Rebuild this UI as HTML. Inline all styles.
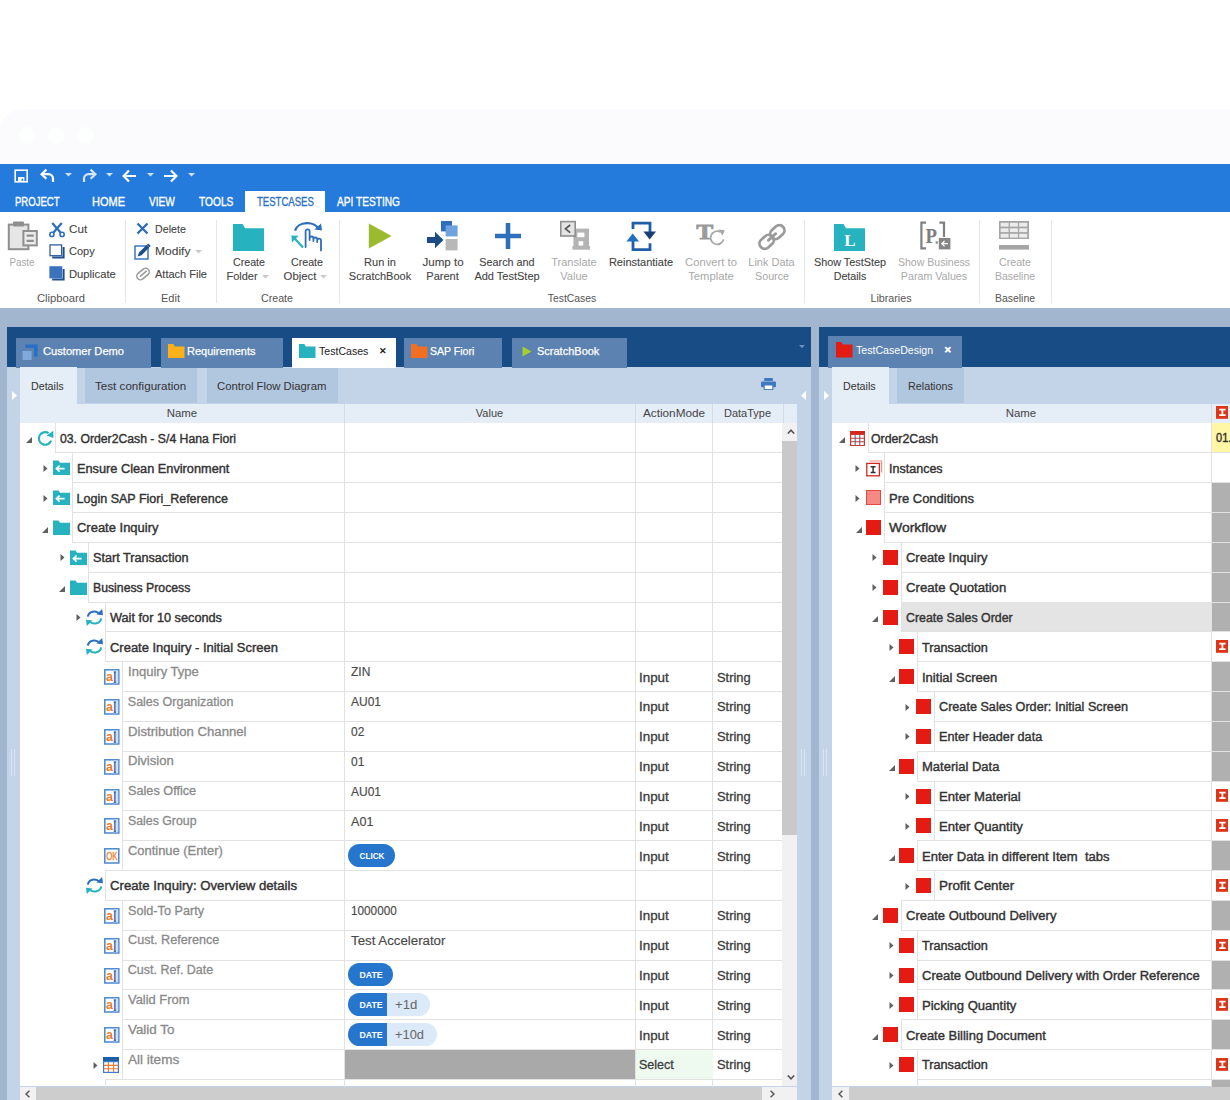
<!DOCTYPE html>
<html lang="en"><head><meta charset="utf-8"><title>TestCases</title>
<style>

html,body{margin:0;padding:0;background:#fff;}
#root{position:relative;width:1230px;height:1100px;overflow:hidden;background:#fff;font-family:"Liberation Sans", Arial, sans-serif;}
#root div,#root svg,#root span.t{position:absolute;}
.t{white-space:pre;line-height:14px;font-size:11px;color:#444;}
.menu{font-size:12px;color:#fff;-webkit-text-stroke:0.35px #fff;}
.menuA{font-size:12px;color:#2a6fc4;-webkit-text-stroke:0.3px #2a6fc4;}
.rb{font-size:11px;color:#444;-webkit-text-stroke:0.1px #444;}
.rbg{font-size:11px;color:#a9a9a9;}
.rbl{font-size:11px;color:#555;}
.ptab{font-size:11px;color:#fff;-webkit-text-stroke:0.25px #fff;}
.ptabA{font-size:11px;color:#222;}
.stab{font-size:11px;color:#333;}
.th{font-size:11px;color:#444;}
.tr{font-size:12.5px;color:#333;-webkit-text-stroke:0.4px #333;}
.trn{font-size:12.5px;color:#333;}
.tg{font-size:12.5px;color:#8a8a8a;-webkit-text-stroke:0.3px #8a8a8a;}
.tv{font-size:12.5px;color:#3c3c3c;-webkit-text-stroke:0.3px #3c3c3c;}
.tvs{font-size:12px;color:#4a4a4a;-webkit-text-stroke:0.15px #4a4a4a;}
.pill{font-size:8.5px;color:#fff;font-weight:bold;}
.pillv{font-size:12px;color:#666;}

</style></head>
<body>
<div id="root">
<div style="left:0px;top:109px;width:1230px;height:60px;background:#fbfbfd;border-top-left-radius:22px;"></div>
<div style="left:18.5px;top:127px;width:17px;height:17px;background:#fdfefe;border-radius:8.5px;"></div>
<div style="left:47.5px;top:127px;width:17px;height:17px;background:#fdfefe;border-radius:8.5px;"></div>
<div style="left:76.5px;top:127px;width:17px;height:17px;background:#fdfefe;border-radius:8.5px;"></div>
<div style="left:0px;top:164px;width:1230px;height:48px;background:#257bdc;"></div>
<svg style="left:14px;top:169px;" width="15" height="15" viewBox="0 0 15 15"><rect x="1.2" y="1.2" width="12" height="11.6" fill="none" stroke="#fff" stroke-width="1.6"/><rect x="4" y="8" width="6.4" height="4.6" fill="#fff"/><rect x="7.6" y="9.6" width="1.6" height="2.2" fill="#257bdc"/></svg>
<svg style="left:40px;top:168px;" width="16" height="16" viewBox="0 0 16 16"><path d="M2 6.2 H8.5 A4.6 4.6 0 0 1 13 10.8 V14" fill="none" stroke="#fff" stroke-width="2.2"/><path d="M6.4 1.6 L1.6 6.2 L6.4 10.8" fill="none" stroke="#fff" stroke-width="2.2"/></svg>
<svg style="left:65px;top:173px;" width="7" height="4" viewBox="0 0 7 4"><path d="M0 0 H7 L3.5 3.6 Z" fill="#cfe1f7"/></svg>
<svg style="left:81px;top:168px;" width="16" height="16" viewBox="0 0 16 16"><path d="M14 6.2 H7.5 A4.6 4.6 0 0 0 3 10.8 V14" fill="none" stroke="#d7e6f8" stroke-width="2.2"/><path d="M9.6 1.6 L14.4 6.2 L9.6 10.8" fill="none" stroke="#d7e6f8" stroke-width="2.2"/></svg>
<svg style="left:105.5px;top:173px;" width="7" height="4" viewBox="0 0 7 4"><path d="M0 0 H7 L3.5 3.6 Z" fill="#cfe1f7"/></svg>
<svg style="left:122px;top:169px;" width="15" height="14" viewBox="0 0 15 14"><path d="M1.6 7 H14 M7 1.4 L1.6 7 L7 12.6" fill="none" stroke="#fff" stroke-width="2.2"/></svg>
<svg style="left:147px;top:173px;" width="7" height="4" viewBox="0 0 7 4"><path d="M0 0 H7 L3.5 3.6 Z" fill="#cfe1f7"/></svg>
<svg style="left:163px;top:169px;" width="15" height="14" viewBox="0 0 15 14"><path d="M13.4 7 H1 M8 1.4 L13.4 7 L8 12.6" fill="none" stroke="#fff" stroke-width="2.2"/></svg>
<svg style="left:188px;top:173px;" width="7" height="4" viewBox="0 0 7 4"><path d="M0 0 H7 L3.5 3.6 Z" fill="#cfe1f7"/></svg>
<span class="t menu" style="top:202px;left:15px;transform-origin:0 50%;transform:translateY(-50%) scaleX(0.795);">PROJECT</span>
<span class="t menu" style="top:202px;left:92px;transform-origin:0 50%;transform:translateY(-50%) scaleX(0.917);">HOME</span>
<span class="t menu" style="top:202px;left:149px;transform-origin:0 50%;transform:translateY(-50%) scaleX(0.839);">VIEW</span>
<span class="t menu" style="top:202px;left:199px;transform-origin:0 50%;transform:translateY(-50%) scaleX(0.850);">TOOLS</span>
<div style="left:245px;top:191px;width:80px;height:22px;background:#fff;"></div>
<span class="t menuA" style="top:202px;left:257px;transform-origin:0 50%;transform:translateY(-50%) scaleX(0.796);">TESTCASES</span>
<span class="t menu" style="top:202px;left:337px;transform-origin:0 50%;transform:translateY(-50%) scaleX(0.845);">API TESTING</span>
<div style="left:0px;top:212px;width:1230px;height:96px;background:#fff;"></div>
<svg style="left:7px;top:221px;" width="32" height="31" viewBox="0 0 32 31"><rect x="1.8" y="3.6" width="19.6" height="24.6" fill="#e6e6e6" stroke="#8f8f8f" stroke-width="2"/><rect x="6" y="0.6" width="11" height="5" rx="1" fill="#8f8f8f"/><rect x="16.4" y="10" width="13.4" height="14.4" fill="#ececec" stroke="#8f8f8f" stroke-width="2"/><path d="M19.6 14.6 H26.8 M19.6 19.8 H26.8" stroke="#8f8f8f" stroke-width="2.2"/></svg>
<span class="t rbg" style="top:262px;left:22px;transform-origin:50% 50%;transform:translate(-50%,-50%) scaleX(0.893);">Paste</span>
<svg style="left:49px;top:222px;" width="16" height="16" viewBox="0 0 16 16"><path d="M3.2 1 L12 11 M12.8 1 L4 11" stroke="#2e6fbb" stroke-width="2.3" fill="none"/><circle cx="2.9" cy="12.4" r="2.1" fill="#fff" stroke="#2e6fbb" stroke-width="1.6"/><circle cx="13.1" cy="12.4" r="2.1" fill="#fff" stroke="#2e6fbb" stroke-width="1.6"/></svg>
<span class="t rb" style="top:229px;left:69px;transform-origin:0 50%;transform:translateY(-50%) scaleX(1.059);">Cut</span>
<svg style="left:49px;top:244px;" width="16" height="15" viewBox="0 0 16 15"><path d="M3.2 13.6 H14.6 V3" fill="none" stroke="#1f4f8a" stroke-width="2"/><rect x="1" y="0.9" width="11.6" height="10.8" fill="#fff" stroke="#2e5f9e" stroke-width="1.3"/></svg>
<span class="t rb" style="top:251px;left:69px;transform-origin:0 50%;transform:translateY(-50%) scaleX(1.000);">Copy</span>
<svg style="left:49px;top:266px;" width="16" height="15" viewBox="0 0 16 15"><path d="M3.2 13.6 H14.6 V3" fill="none" stroke="#1f4f8a" stroke-width="2"/><rect x="1" y="0.9" width="11.6" height="10.8" fill="#3b72bd" stroke="#3b72bd" stroke-width="1.3"/></svg>
<span class="t rb" style="top:273.5px;left:69px;transform-origin:0 50%;transform:translateY(-50%) scaleX(1.022);">Duplicate</span>
<span class="t rbl" style="top:298px;left:61px;transform-origin:50% 50%;transform:translate(-50%,-50%) scaleX(1.021);">Clipboard</span>
<div style="left:125px;top:220px;width:1px;height:83px;background:#e6e6e6;"></div>
<svg style="left:136px;top:222px;" width="13" height="13" viewBox="0 0 13 13"><path d="M1.5 1.5 L11.5 11.5 M11.5 1.5 L1.5 11.5" stroke="#2b6cb8" stroke-width="2.3" fill="none"/></svg>
<span class="t rb" style="top:229px;left:155px;transform-origin:0 50%;transform:translateY(-50%) scaleX(0.969);">Delete</span>
<svg style="left:134px;top:243px;" width="17" height="17" viewBox="0 0 17 17"><rect x="1" y="3" width="13" height="13" fill="#fff" stroke="#2e6fbb" stroke-width="1.4"/><path d="M3.6 13.6 L5 9.6 L12.6 2 L15.2 4.6 L7.6 12.2 Z" fill="#1f4f8a"/><path d="M13.6 1 L16.2 3.6" stroke="#1f4f8a" stroke-width="1.6"/></svg>
<span class="t rb" style="top:251px;left:155px;transform-origin:0 50%;transform:translateY(-50%) scaleX(1.094);">Modify</span>
<svg style="left:195px;top:249.5px;" width="7" height="4" viewBox="0 0 7 4"><path d="M0 0 H7 L3.5 3.6 Z" fill="#c9c9c9"/></svg>
<svg style="left:135px;top:266px;" width="16" height="16" viewBox="0 0 16 16"><g transform="rotate(-40 8 8)"><rect x="1" y="4.4" width="14" height="7.2" rx="3.6" fill="none" stroke="#9a9a9a" stroke-width="1.5"/><path d="M4.6 8 H12.4" stroke="#9a9a9a" stroke-width="1.5" stroke-linecap="round"/></g></svg>
<span class="t rb" style="top:273.5px;left:155px;transform-origin:0 50%;transform:translateY(-50%) scaleX(1.000);">Attach File</span>
<span class="t rbl" style="top:298px;left:170.5px;transform-origin:50% 50%;transform:translate(-50%,-50%) scaleX(1.000);">Edit</span>
<div style="left:216px;top:220px;width:1px;height:83px;background:#e6e6e6;"></div>
<svg style="left:233px;top:223px;" width="31" height="28" viewBox="0 0 31 28"><path d="M0 1 H9.5 L12 5.2 H31 V28 H0 Z" fill="#26b2bf"/></svg>
<span class="t rb" style="top:262px;left:249px;transform-origin:50% 50%;transform:translate(-50%,-50%) scaleX(0.970);">Create</span>
<span class="t rb" style="top:276px;left:242px;transform-origin:50% 50%;transform:translate(-50%,-50%) scaleX(1.000);">Folder</span>
<svg style="left:262px;top:274.5px;" width="7" height="4" viewBox="0 0 7 4"><path d="M0 0 H7 L3.5 3.6 Z" fill="#c9c9c9"/></svg>
<svg style="left:290px;top:221px;" width="33" height="31" viewBox="0 0 33 31"><path d="M5 9.6 A12.5 9.6 0 0 1 29 8.6" fill="none" stroke="#2e6fbb" stroke-width="2.3"/><path d="M24.4 8.6 L32 9.6 L31 2.6 Z" fill="#2e6fbb"/><path d="M1.4 14.6 L8.6 14.8 L2 21.6 Z" fill="#26b2bf"/><path d="M4.6 17.6 L13 26.6" stroke="#26b2bf" stroke-width="2.2"/><path d="M15.6 26 V10.4 a2 2 0 0 1 4 0 V19 M19.6 17.4 a1.9 1.9 0 0 1 3.8 0 V20 M23.4 18.4 a1.9 1.9 0 0 1 3.8 0 V21 M27.2 19.6 a1.9 1.9 0 0 1 3.8 0 V29.4" fill="none" stroke="#2e6fbb" stroke-width="1.8" stroke-linecap="round"/></svg>
<span class="t rb" style="top:262px;left:306.5px;transform-origin:50% 50%;transform:translate(-50%,-50%) scaleX(0.970);">Create</span>
<span class="t rb" style="top:276px;left:300px;transform-origin:50% 50%;transform:translate(-50%,-50%) scaleX(1.031);">Object</span>
<svg style="left:320px;top:274.5px;" width="7" height="4" viewBox="0 0 7 4"><path d="M0 0 H7 L3.5 3.6 Z" fill="#c9c9c9"/></svg>
<span class="t rbl" style="top:298px;left:277px;transform-origin:50% 50%;transform:translate(-50%,-50%) scaleX(0.970);">Create</span>
<div style="left:339px;top:220px;width:1px;height:83px;background:#e6e6e6;"></div>
<svg style="left:368px;top:222px;" width="26" height="28" viewBox="0 0 26 28"><path d="M0.8 1.4 L23.6 14 L0.8 26.6 Z" fill="#9bbb2f"/></svg>
<span class="t rb" style="top:262px;left:380px;transform-origin:50% 50%;transform:translate(-50%,-50%) scaleX(1.000);">Run in</span>
<span class="t rb" style="top:276px;left:380px;transform-origin:50% 50%;transform:translate(-50%,-50%) scaleX(1.000);">ScratchBook</span>
<svg style="left:427px;top:221px;" width="32" height="31" viewBox="0 0 32 31"><rect x="14" y="0" width="11" height="10.4" fill="#2e6fbb"/><rect x="18.6" y="4.4" width="12" height="11" fill="#6fa3df"/><rect x="18.6" y="18" width="12" height="11.4" fill="#b8b8b8"/><path d="M0 16 H8 V10.8 L16.4 19 L8 27.2 V22 H0 Z" fill="#1b4c86"/></svg>
<span class="t rb" style="top:262px;left:442.5px;transform-origin:50% 50%;transform:translate(-50%,-50%) scaleX(1.051);">Jump to</span>
<span class="t rb" style="top:276px;left:442.5px;transform-origin:50% 50%;transform:translate(-50%,-50%) scaleX(1.000);">Parent</span>
<svg style="left:494px;top:222px;" width="28" height="28" viewBox="0 0 28 28"><path d="M14 1 V27 M1 14 H27" stroke="#2e6fbb" stroke-width="4.6" fill="none"/></svg>
<span class="t rb" style="top:262px;left:507px;transform-origin:50% 50%;transform:translate(-50%,-50%) scaleX(0.982);">Search and</span>
<span class="t rb" style="top:276px;left:507px;transform-origin:50% 50%;transform:translate(-50%,-50%) scaleX(1.000);">Add TestStep</span>
<svg style="left:559px;top:220px;" width="31" height="32" viewBox="0 0 31 32"><rect x="14.4" y="8.6" width="15.6" height="20.6" fill="#b4b4b4"/><rect x="13.4" y="26" width="17.6" height="3.6" fill="#b4b4b4"/><rect x="18.4" y="12.6" width="7" height="4.6" fill="#fff"/><rect x="19.6" y="21.2" width="4.6" height="4.4" fill="#fff"/><rect x="1.8" y="1.6" width="14.4" height="14.4" fill="#e4e4e4" stroke="#8f8f8f" stroke-width="1.6"/><path d="M11.2 5 L6.4 8.8 L11.2 12.6" fill="none" stroke="#555" stroke-width="1.6"/></svg>
<span class="t rbg" style="top:262px;left:574px;transform-origin:50% 50%;transform:translate(-50%,-50%) scaleX(1.000);">Translate</span>
<span class="t rbg" style="top:276px;left:574px;transform-origin:50% 50%;transform:translate(-50%,-50%) scaleX(1.000);">Value</span>
<svg style="left:626px;top:221px;" width="32" height="31" viewBox="0 0 32 31"><path d="M7 8 V2.2 H24 V11" fill="none" stroke="#1f5fa8" stroke-width="2.8"/><path d="M17.4 10.4 H30 L23.7 18.4 Z" fill="#173f73"/><path d="M7 19.5 V28.6 H24 V22.2" fill="none" stroke="#1f5fa8" stroke-width="2.8"/><path d="M0.4 20.4 H13 L6.7 12.4 Z" fill="#1f6fc0"/></svg>
<span class="t rb" style="top:262px;left:641px;transform-origin:50% 50%;transform:translate(-50%,-50%) scaleX(1.000);">Reinstantiate</span>
<svg style="left:696px;top:222px;" width="32" height="30" viewBox="0 0 32 30"><text x="0.2" y="16.6" font-family="Liberation Serif, serif" font-weight="bold" font-size="22" fill="#9a9a9a" stroke="#9a9a9a" stroke-width="0.9" textLength="17" lengthAdjust="spacingAndGlyphs">T</text><path d="M27.6 17.4 A6.6 6.6 0 1 1 24.4 10" fill="none" stroke="#a6a6a6" stroke-width="1.8"/><path d="M22.4 7.4 L28.8 8.2 L26.4 13.6 Z" fill="#a6a6a6"/></svg>
<span class="t rbg" style="top:262px;left:711px;transform-origin:50% 50%;transform:translate(-50%,-50%) scaleX(1.020);">Convert to</span>
<span class="t rbg" style="top:276px;left:711px;transform-origin:50% 50%;transform:translate(-50%,-50%) scaleX(1.022);">Template</span>
<svg style="left:757px;top:222px;" width="30" height="30" viewBox="0 0 30 30"><g transform="rotate(-42 15 15)" fill="none" stroke="#9a9a9a" stroke-width="2.8"><rect x="0" y="9.8" width="15.6" height="10.4" rx="5.2"/><rect x="14.4" y="9.8" width="15.6" height="10.4" rx="5.2"/><path d="M10 15 H20" stroke-linecap="round"/></g></svg>
<span class="t rbg" style="top:262px;left:771.5px;transform-origin:50% 50%;transform:translate(-50%,-50%) scaleX(1.000);">Link Data</span>
<span class="t rbg" style="top:276px;left:771.5px;transform-origin:50% 50%;transform:translate(-50%,-50%) scaleX(0.971);">Source</span>
<span class="t rbl" style="top:298px;left:572px;transform-origin:50% 50%;transform:translate(-50%,-50%) scaleX(0.941);">TestCases</span>
<div style="left:804px;top:220px;width:1px;height:83px;background:#e6e6e6;"></div>
<svg style="left:834px;top:223px;" width="31" height="28" viewBox="0 0 31 28"><path d="M0 1 H9.5 L12 5.2 H31 V28 H0 Z" fill="#26b2bf"/></svg>
<svg style="left:834px;top:223px;" width="31" height="28" viewBox="0 0 31 28"><text x="16" y="22.5" text-anchor="middle" font-family="Liberation Serif, serif" font-weight="bold" font-size="17" fill="#fff">L</text></svg>
<span class="t rb" style="top:262px;left:850px;transform-origin:50% 50%;transform:translate(-50%,-50%) scaleX(0.986);">Show TestStep</span>
<span class="t rb" style="top:276px;left:850px;transform-origin:50% 50%;transform:translate(-50%,-50%) scaleX(0.971);">Details</span>
<svg style="left:918px;top:221px;" width="33" height="31" viewBox="0 0 33 31"><path d="M8 1.6 H3.4 V27.4 H8" fill="none" stroke="#808080" stroke-width="2.2"/><path d="M21.4 1.6 H26 V16" fill="none" stroke="#808080" stroke-width="2.2"/><text x="7.4" y="21.5" font-family="Liberation Serif, serif" font-weight="bold" font-size="22" fill="#7d7d7d" textLength="11.5" lengthAdjust="spacingAndGlyphs">P</text><rect x="17.6" y="20.4" width="2.2" height="2.2" fill="#808080"/><rect x="20.8" y="17" width="11.6" height="11.4" fill="#858585"/><path d="M30 22.7 H24 M26.6 20 L23.8 22.7 L26.6 25.4" stroke="#fff" stroke-width="1.3" fill="none"/></svg>
<span class="t rbg" style="top:262px;left:934px;transform-origin:50% 50%;transform:translate(-50%,-50%) scaleX(0.960);">Show Business</span>
<span class="t rbg" style="top:276px;left:934px;transform-origin:50% 50%;transform:translate(-50%,-50%) scaleX(0.971);">Param Values</span>
<span class="t rbl" style="top:298px;left:891px;transform-origin:50% 50%;transform:translate(-50%,-50%) scaleX(0.976);">Libraries</span>
<div style="left:979px;top:220px;width:1px;height:83px;background:#e6e6e6;"></div>
<svg style="left:999px;top:221px;" width="30" height="30" viewBox="0 0 30 30"><rect x="0" y="0" width="30" height="18" fill="#a6a6a6"/><rect x="1.6" y="1.8" width="8" height="3.8" fill="#ececec"/><rect x="10.9" y="1.8" width="8" height="3.8" fill="#ececec"/><rect x="20.2" y="1.8" width="8" height="3.8" fill="#ececec"/><rect x="1.6" y="7.3" width="8" height="3.8" fill="#ececec"/><rect x="10.9" y="7.3" width="8" height="3.8" fill="#ececec"/><rect x="20.2" y="7.3" width="8" height="3.8" fill="#ececec"/><rect x="1.6" y="12.8" width="8" height="3.8" fill="#ececec"/><rect x="10.9" y="12.8" width="8" height="3.8" fill="#ececec"/><rect x="20.2" y="12.8" width="8" height="3.8" fill="#ececec"/><rect x="0" y="24" width="30" height="4.6" fill="#a6a6a6"/></svg>
<span class="t rbg" style="top:262px;left:1014.5px;transform-origin:50% 50%;transform:translate(-50%,-50%) scaleX(0.970);">Create</span>
<span class="t rbg" style="top:276px;left:1014.5px;transform-origin:50% 50%;transform:translate(-50%,-50%) scaleX(0.952);">Baseline</span>
<span class="t rbl" style="top:298px;left:1014.5px;transform-origin:50% 50%;transform:translate(-50%,-50%) scaleX(0.952);">Baseline</span>
<div style="left:1051px;top:220px;width:1px;height:83px;background:#e6e6e6;"></div>
<div style="left:0px;top:308px;width:1230px;height:792px;background:#a3b6cf;"></div>
<div style="left:6.5px;top:327px;width:804.1px;height:773px;background:#c3d4e8;"></div>
<div style="left:6.5px;top:327px;width:804.1px;height:40px;background:#174c85;"></div>
<div style="left:16.4px;top:338px;width:135.1px;height:29.5px;background:#5b82b0;"></div>
<svg style="left:21.9px;top:343.5px;" width="17" height="17" viewBox="0 0 17 17"><path d="M3.4 0.4 H15.6 V12.6 H12 V4 H3.4 Z" fill="#2a6fc4"/><rect x="0.6" y="7" width="9" height="9" fill="#7fa8dc"/></svg>
<span class="t ptab" style="top:351.3px;left:43px;transform-origin:0 50%;transform:translateY(-50%) scaleX(1.012);">Customer Demo</span>
<div style="left:161px;top:338px;width:122px;height:29.5px;background:#5b82b0;"></div>
<svg style="left:168px;top:343.7px;" width="17" height="14.5" viewBox="0 0 17 14.5"><path d="M0 0 H5.4 L6.8 2.4 H16.5 V14.5 H0 Z" fill="#fbb117"/></svg>
<span class="t ptab" style="top:351.3px;left:187px;transform-origin:0 50%;transform:translateY(-50%) scaleX(1.000);">Requirements</span>
<div style="left:292px;top:338px;width:104px;height:29.5px;background:#fff;"></div>
<svg style="left:299px;top:343.7px;" width="17" height="14.5" viewBox="0 0 17 14.5"><path d="M0 0 H5.4 L6.8 2.4 H16.5 V14.5 H0 Z" fill="#26b2bf"/></svg>
<span class="t ptabA" style="top:351.3px;left:319px;transform-origin:0 50%;transform:translateY(-50%) scaleX(0.961);">TestCases</span>
<div style="left:404px;top:338px;width:98px;height:29.5px;background:#5b82b0;"></div>
<svg style="left:411px;top:343.7px;" width="17" height="14.5" viewBox="0 0 17 14.5"><path d="M0 0 H5.4 L6.8 2.4 H16.5 V14.5 H0 Z" fill="#f26f21"/></svg>
<span class="t ptab" style="top:351.3px;left:430px;transform-origin:0 50%;transform:translateY(-50%) scaleX(0.957);">SAP Fiori</span>
<div style="left:511.5px;top:338px;width:115.5px;height:29.5px;background:#5b82b0;"></div>
<svg style="left:521.5px;top:345.5px;" width="10" height="11" viewBox="0 0 10 11"><path d="M0.5 0.5 L9.5 5.5 L0.5 10.5 Z" fill="#a4cf2e"/></svg>
<span class="t ptab" style="top:351.3px;left:537px;transform-origin:0 50%;transform:translateY(-50%) scaleX(1.000);">ScratchBook</span>
<span class="t ptabA" style="top:351.3px;left:379px;transform-origin:0 50%;transform:translateY(-50%);font-size:9px;font-weight:bold;">✕</span>
<svg style="left:799px;top:344.5px;" width="6" height="3.4" viewBox="0 0 6 3.4"><path d="M0 0 H6 L3 3.2 Z" fill="#6a8fbb"/></svg>
<div style="left:19.5px;top:367px;width:57px;height:36.5px;background:#e5edf7;"></div>
<div style="left:84.5px;top:367.5px;width:112px;height:35px;background:#b1c6df;"></div>
<div style="left:206.5px;top:367.5px;width:131px;height:35px;background:#b1c6df;"></div>
<span class="t stab" style="top:385.5px;left:30.5px;transform-origin:0 50%;transform:translateY(-50%) scaleX(0.971);">Details</span>
<span class="t stab" style="top:386px;left:95px;transform-origin:0 50%;transform:translateY(-50%) scaleX(1.058);">Test configuration</span>
<span class="t stab" style="top:386px;left:217px;transform-origin:0 50%;transform:translateY(-50%) scaleX(1.028);">Control Flow Diagram</span>
<svg style="left:11.5px;top:391px;" width="5" height="9" viewBox="0 0 5 9"><path d="M0 0 L5 4.5 L0 9 Z" fill="#fff"/></svg>
<svg style="left:801px;top:391px;" width="5" height="9" viewBox="0 0 5 9"><path d="M5 0 L0 4.5 L5 9 Z" fill="#fff"/></svg>
<div style="left:10.5px;top:749px;width:1.3px;height:27px;background:#dbe6f3;"></div>
<div style="left:13.5px;top:749px;width:1.3px;height:27px;background:#dbe6f3;"></div>
<div style="left:801px;top:749px;width:1.3px;height:27px;background:#dbe6f3;"></div>
<div style="left:804px;top:749px;width:1.3px;height:27px;background:#dbe6f3;"></div>
<svg style="left:761px;top:378px;" width="15" height="12" viewBox="0 0 15 12"><rect x="3.2" y="0" width="8.6" height="3" fill="#4178bf"/><rect x="0" y="3.6" width="15" height="5.6" rx="1" fill="#4178bf"/><rect x="3.2" y="7" width="8.6" height="4.6" fill="#fff" stroke="#4178bf" stroke-width="1"/></svg>
<div style="left:19.5px;top:403.5px;width:777.5px;height:20px;background:#e5edf7;"></div>
<div style="left:344px;top:404px;width:1px;height:19px;background:#d3dbe6;"></div>
<div style="left:635px;top:404px;width:1px;height:19px;background:#d3dbe6;"></div>
<div style="left:712.4px;top:404px;width:1px;height:19px;background:#d3dbe6;"></div>
<div style="left:783px;top:404px;width:1px;height:19px;background:#d3dbe6;"></div>
<span class="t th" style="top:412.5px;left:182px;transform-origin:50% 50%;transform:translate(-50%,-50%) scaleX(1.034);">Name</span>
<span class="t th" style="top:412.5px;left:489.5px;transform-origin:50% 50%;transform:translate(-50%,-50%) scaleX(1.000);">Value</span>
<span class="t th" style="top:412.5px;left:673.5px;transform-origin:50% 50%;transform:translate(-50%,-50%) scaleX(1.069);">ActionMode</span>
<span class="t th" style="top:412.5px;left:747.5px;transform-origin:50% 50%;transform:translate(-50%,-50%) scaleX(1.000);">DataType</span>
<div style="left:19.5px;top:423.4px;width:763.5px;height:663.1px;background:#fff;"></div>
<div style="left:55.0px;top:423.4px;width:1px;height:29.03000000000003px;background:#e2e2e2;"></div>
<div style="left:344px;top:423.4px;width:1px;height:29.03000000000003px;background:#e2e2e2;"></div>
<div style="left:635px;top:423.4px;width:1px;height:29.03000000000003px;background:#e2e2e2;"></div>
<div style="left:712.4px;top:423.4px;width:1px;height:29.03000000000003px;background:#e2e2e2;"></div>
<svg style="left:25.5px;top:437.1px;" width="6" height="6" viewBox="0 0 6 6"><path d="M6 0 V6 H0 Z" fill="#606060"/></svg>
<svg style="left:36.5px;top:429.90000000000003px;" width="17" height="17" viewBox="0 0 17 17"><path d="M14.1 10.6 A6.3 6.3 0 1 1 11.6 3.2" fill="none" stroke="#26b2bf" stroke-width="2.1"/><path d="M9.6 5.6 L16.4 0.8 L16.4 8 Z" fill="#26b2bf"/></svg>
<span class="t tr" style="top:438.90000000000003px;left:60.0px;transform-origin:0 50%;transform:translateY(-50%) scaleX(0.978);">03. Order2Cash - S/4 Hana Fiori</span>
<div style="left:55.0px;top:452.43px;width:728.0px;height:1px;background:#e2e2e2;"></div>
<div style="left:71.6px;top:452.43px;width:1px;height:29.829999999999984px;background:#e2e2e2;"></div>
<div style="left:344px;top:452.43px;width:1px;height:29.829999999999984px;background:#e2e2e2;"></div>
<div style="left:635px;top:452.43px;width:1px;height:29.829999999999984px;background:#e2e2e2;"></div>
<div style="left:712.4px;top:452.43px;width:1px;height:29.829999999999984px;background:#e2e2e2;"></div>
<svg style="left:43.1px;top:464.93px;" width="5" height="7" viewBox="0 0 5 7"><path d="M0.5 0 L4.5 3.5 L0.5 7 Z" fill="#606060"/></svg>
<svg style="left:53.1px;top:460.43px;" width="17" height="15" viewBox="0 0 17 15"><path d="M0 0.5 H5.6 L7 2.8 H17 V15 H0 Z" fill="#26b2bf"/><path d="M3.4 8.6 H11.6 M6.6 5.6 L3.4 8.6 L6.6 11.6" fill="none" stroke="#fff" stroke-width="1.7"/></svg>
<span class="t tr" style="top:468.73px;left:76.6px;transform-origin:0 50%;transform:translateY(-50%) scaleX(1.020);">Ensure Clean Environment</span>
<div style="left:71.6px;top:482.26px;width:711.4px;height:1px;background:#e2e2e2;"></div>
<div style="left:71.6px;top:482.26px;width:1px;height:29.83000000000004px;background:#e2e2e2;"></div>
<div style="left:344px;top:482.26px;width:1px;height:29.83000000000004px;background:#e2e2e2;"></div>
<div style="left:635px;top:482.26px;width:1px;height:29.83000000000004px;background:#e2e2e2;"></div>
<div style="left:712.4px;top:482.26px;width:1px;height:29.83000000000004px;background:#e2e2e2;"></div>
<svg style="left:43.1px;top:494.76px;" width="5" height="7" viewBox="0 0 5 7"><path d="M0.5 0 L4.5 3.5 L0.5 7 Z" fill="#606060"/></svg>
<svg style="left:53.1px;top:490.26px;" width="17" height="15" viewBox="0 0 17 15"><path d="M0 0.5 H5.6 L7 2.8 H17 V15 H0 Z" fill="#26b2bf"/><path d="M3.4 8.6 H11.6 M6.6 5.6 L3.4 8.6 L6.6 11.6" fill="none" stroke="#fff" stroke-width="1.7"/></svg>
<span class="t tr" style="top:498.56px;left:76.6px;transform-origin:0 50%;transform:translateY(-50%) scaleX(1.000);">Login SAP Fiori_Reference</span>
<div style="left:71.6px;top:512.09px;width:711.4px;height:1px;background:#e2e2e2;"></div>
<div style="left:71.6px;top:512.09px;width:1px;height:29.83000000000004px;background:#e2e2e2;"></div>
<div style="left:344px;top:512.09px;width:1px;height:29.83000000000004px;background:#e2e2e2;"></div>
<div style="left:635px;top:512.09px;width:1px;height:29.83000000000004px;background:#e2e2e2;"></div>
<div style="left:712.4px;top:512.09px;width:1px;height:29.83000000000004px;background:#e2e2e2;"></div>
<svg style="left:42.1px;top:526.59px;" width="6" height="6" viewBox="0 0 6 6"><path d="M6 0 V6 H0 Z" fill="#606060"/></svg>
<svg style="left:53.1px;top:520.09px;" width="17" height="15" viewBox="0 0 17 15"><path d="M0 0.5 H5.6 L7 2.8 H17 V15 H0 Z" fill="#26b2bf"/></svg>
<span class="t tr" style="top:528.39px;left:76.6px;transform-origin:0 50%;transform:translateY(-50%) scaleX(1.038);">Create Inquiry</span>
<div style="left:71.6px;top:541.9200000000001px;width:711.4px;height:1px;background:#e2e2e2;"></div>
<div style="left:88.2px;top:541.9200000000001px;width:1px;height:29.83000000000004px;background:#e2e2e2;"></div>
<div style="left:344px;top:541.9200000000001px;width:1px;height:29.83000000000004px;background:#e2e2e2;"></div>
<div style="left:635px;top:541.9200000000001px;width:1px;height:29.83000000000004px;background:#e2e2e2;"></div>
<div style="left:712.4px;top:541.9200000000001px;width:1px;height:29.83000000000004px;background:#e2e2e2;"></div>
<svg style="left:59.7px;top:554.4200000000001px;" width="5" height="7" viewBox="0 0 5 7"><path d="M0.5 0 L4.5 3.5 L0.5 7 Z" fill="#606060"/></svg>
<svg style="left:69.7px;top:549.9200000000001px;" width="17" height="15" viewBox="0 0 17 15"><path d="M0 0.5 H5.6 L7 2.8 H17 V15 H0 Z" fill="#26b2bf"/><path d="M3.4 8.6 H11.6 M6.6 5.6 L3.4 8.6 L6.6 11.6" fill="none" stroke="#fff" stroke-width="1.7"/></svg>
<span class="t tr" style="top:558.22px;left:93.2px;transform-origin:0 50%;transform:translateY(-50%) scaleX(1.011);">Start Transaction</span>
<div style="left:88.2px;top:571.75px;width:694.8px;height:1px;background:#e2e2e2;"></div>
<div style="left:88.2px;top:571.75px;width:1px;height:29.83000000000004px;background:#e2e2e2;"></div>
<div style="left:344px;top:571.75px;width:1px;height:29.83000000000004px;background:#e2e2e2;"></div>
<div style="left:635px;top:571.75px;width:1px;height:29.83000000000004px;background:#e2e2e2;"></div>
<div style="left:712.4px;top:571.75px;width:1px;height:29.83000000000004px;background:#e2e2e2;"></div>
<svg style="left:58.7px;top:586.25px;" width="6" height="6" viewBox="0 0 6 6"><path d="M6 0 V6 H0 Z" fill="#606060"/></svg>
<svg style="left:69.7px;top:579.75px;" width="17" height="15" viewBox="0 0 17 15"><path d="M0 0.5 H5.6 L7 2.8 H17 V15 H0 Z" fill="#26b2bf"/></svg>
<span class="t tr" style="top:588.05px;left:93.2px;transform-origin:0 50%;transform:translateY(-50%) scaleX(0.980);">Business Process</span>
<div style="left:88.2px;top:601.58px;width:694.8px;height:1px;background:#e2e2e2;"></div>
<div style="left:104.80000000000001px;top:601.58px;width:1px;height:29.83000000000004px;background:#e2e2e2;"></div>
<div style="left:344px;top:601.58px;width:1px;height:29.83000000000004px;background:#e2e2e2;"></div>
<div style="left:635px;top:601.58px;width:1px;height:29.83000000000004px;background:#e2e2e2;"></div>
<div style="left:712.4px;top:601.58px;width:1px;height:29.83000000000004px;background:#e2e2e2;"></div>
<svg style="left:76.30000000000001px;top:614.08px;" width="5" height="7" viewBox="0 0 5 7"><path d="M0.5 0 L4.5 3.5 L0.5 7 Z" fill="#606060"/></svg>
<svg style="left:85.30000000000001px;top:608.58px;" width="19" height="17" viewBox="0 0 19 17"><path d="M2.8 7.6 A6.6 6 0 0 1 14.4 4.6" fill="none" stroke="#2a6fc4" stroke-width="2"/><path d="M11.4 5.4 L18 6.2 L17.2 0 Z" fill="#2a6fc4"/><path d="M16.2 9.4 A6.6 6 0 0 1 4.6 12.4" fill="none" stroke="#26b2bf" stroke-width="2"/><path d="M7.6 11.6 L1 10.8 L1.8 17 Z" fill="#26b2bf"/></svg>
<span class="t tr" style="top:617.88px;left:109.80000000000001px;transform-origin:0 50%;transform:translateY(-50%) scaleX(1.018);">Wait for 10 seconds</span>
<div style="left:104.80000000000001px;top:631.4100000000001px;width:678.2px;height:1px;background:#e2e2e2;"></div>
<div style="left:104.80000000000001px;top:631.4100000000001px;width:1px;height:29.83000000000004px;background:#e2e2e2;"></div>
<div style="left:344px;top:631.4100000000001px;width:1px;height:29.83000000000004px;background:#e2e2e2;"></div>
<div style="left:635px;top:631.4100000000001px;width:1px;height:29.83000000000004px;background:#e2e2e2;"></div>
<div style="left:712.4px;top:631.4100000000001px;width:1px;height:29.83000000000004px;background:#e2e2e2;"></div>
<svg style="left:85.30000000000001px;top:638.4100000000001px;" width="19" height="17" viewBox="0 0 19 17"><path d="M2.8 7.6 A6.6 6 0 0 1 14.4 4.6" fill="none" stroke="#2a6fc4" stroke-width="2"/><path d="M11.4 5.4 L18 6.2 L17.2 0 Z" fill="#2a6fc4"/><path d="M16.2 9.4 A6.6 6 0 0 1 4.6 12.4" fill="none" stroke="#26b2bf" stroke-width="2"/><path d="M7.6 11.6 L1 10.8 L1.8 17 Z" fill="#26b2bf"/></svg>
<span class="t tr" style="top:647.71px;left:109.80000000000001px;transform-origin:0 50%;transform:translateY(-50%) scaleX(1.037);">Create Inquiry - Initial Screen</span>
<div style="left:104.80000000000001px;top:661.24px;width:678.2px;height:1px;background:#e2e2e2;"></div>
<div style="left:122.0px;top:661.24px;width:1px;height:29.83000000000004px;background:#e2e2e2;"></div>
<div style="left:344px;top:661.24px;width:1px;height:29.83000000000004px;background:#e2e2e2;"></div>
<div style="left:635px;top:661.24px;width:1px;height:29.83000000000004px;background:#e2e2e2;"></div>
<div style="left:712.4px;top:661.24px;width:1px;height:29.83000000000004px;background:#e2e2e2;"></div>
<svg style="left:104.0px;top:669.34px;" width="16" height="16" viewBox="0 0 16 16"><rect x="0.8" y="0.8" width="14" height="14.2" fill="#fff" stroke="#4a86d0" stroke-width="1.5"/><rect x="9.6" y="1.6" width="4.6" height="12.6" fill="#cfe0f5"/><text x="2" y="12.4" font-family="Liberation Sans, sans-serif" font-weight="bold" font-size="12.5" fill="#ef7a2a">a</text><path d="M10.9 3 V13.2 M9.8 3 H12 M9.8 13.2 H12" stroke="#1f4f8a" stroke-width="1.1"/></svg>
<span class="t tg" style="top:671.94px;left:127.8px;transform-origin:0 50%;transform:translateY(-50%) scaleX(1.044);">Inquiry Type</span>
<span class="t tvs" style="top:672.44px;left:351px;transform-origin:0 50%;transform:translateY(-50%) scaleX(1.000);">ZIN</span>
<span class="t tv" style="top:677.54px;left:639px;transform-origin:0 50%;transform:translateY(-50%) scaleX(1.071);">Input</span>
<span class="t tv" style="top:677.54px;left:717px;transform-origin:0 50%;transform:translateY(-50%) scaleX(1.030);">String</span>
<div style="left:122.0px;top:691.0699999999999px;width:661.0px;height:1px;background:#e2e2e2;"></div>
<div style="left:122.0px;top:691.0699999999999px;width:1px;height:29.83000000000004px;background:#e2e2e2;"></div>
<div style="left:344px;top:691.0699999999999px;width:1px;height:29.83000000000004px;background:#e2e2e2;"></div>
<div style="left:635px;top:691.0699999999999px;width:1px;height:29.83000000000004px;background:#e2e2e2;"></div>
<div style="left:712.4px;top:691.0699999999999px;width:1px;height:29.83000000000004px;background:#e2e2e2;"></div>
<svg style="left:104.0px;top:699.17px;" width="16" height="16" viewBox="0 0 16 16"><rect x="0.8" y="0.8" width="14" height="14.2" fill="#fff" stroke="#4a86d0" stroke-width="1.5"/><rect x="9.6" y="1.6" width="4.6" height="12.6" fill="#cfe0f5"/><text x="2" y="12.4" font-family="Liberation Sans, sans-serif" font-weight="bold" font-size="12.5" fill="#ef7a2a">a</text><path d="M10.9 3 V13.2 M9.8 3 H12 M9.8 13.2 H12" stroke="#1f4f8a" stroke-width="1.1"/></svg>
<span class="t tg" style="top:701.77px;left:127.8px;transform-origin:0 50%;transform:translateY(-50%) scaleX(1.000);">Sales Organization</span>
<span class="t tvs" style="top:702.27px;left:351px;transform-origin:0 50%;transform:translateY(-50%) scaleX(1.000);">AU01</span>
<span class="t tv" style="top:707.3699999999999px;left:639px;transform-origin:0 50%;transform:translateY(-50%) scaleX(1.071);">Input</span>
<span class="t tv" style="top:707.3699999999999px;left:717px;transform-origin:0 50%;transform:translateY(-50%) scaleX(1.030);">String</span>
<div style="left:122.0px;top:720.9px;width:661.0px;height:1px;background:#e2e2e2;"></div>
<div style="left:122.0px;top:720.9px;width:1px;height:29.83000000000004px;background:#e2e2e2;"></div>
<div style="left:344px;top:720.9px;width:1px;height:29.83000000000004px;background:#e2e2e2;"></div>
<div style="left:635px;top:720.9px;width:1px;height:29.83000000000004px;background:#e2e2e2;"></div>
<div style="left:712.4px;top:720.9px;width:1px;height:29.83000000000004px;background:#e2e2e2;"></div>
<svg style="left:104.0px;top:729.0px;" width="16" height="16" viewBox="0 0 16 16"><rect x="0.8" y="0.8" width="14" height="14.2" fill="#fff" stroke="#4a86d0" stroke-width="1.5"/><rect x="9.6" y="1.6" width="4.6" height="12.6" fill="#cfe0f5"/><text x="2" y="12.4" font-family="Liberation Sans, sans-serif" font-weight="bold" font-size="12.5" fill="#ef7a2a">a</text><path d="M10.9 3 V13.2 M9.8 3 H12 M9.8 13.2 H12" stroke="#1f4f8a" stroke-width="1.1"/></svg>
<span class="t tg" style="top:731.6px;left:127.8px;transform-origin:0 50%;transform:translateY(-50%) scaleX(1.053);">Distribution Channel</span>
<span class="t tvs" style="top:732.1px;left:351px;transform-origin:0 50%;transform:translateY(-50%) scaleX(1.000);">02</span>
<span class="t tv" style="top:737.1999999999999px;left:639px;transform-origin:0 50%;transform:translateY(-50%) scaleX(1.071);">Input</span>
<span class="t tv" style="top:737.1999999999999px;left:717px;transform-origin:0 50%;transform:translateY(-50%) scaleX(1.030);">String</span>
<div style="left:122.0px;top:750.73px;width:661.0px;height:1px;background:#e2e2e2;"></div>
<div style="left:122.0px;top:750.73px;width:1px;height:29.83000000000004px;background:#e2e2e2;"></div>
<div style="left:344px;top:750.73px;width:1px;height:29.83000000000004px;background:#e2e2e2;"></div>
<div style="left:635px;top:750.73px;width:1px;height:29.83000000000004px;background:#e2e2e2;"></div>
<div style="left:712.4px;top:750.73px;width:1px;height:29.83000000000004px;background:#e2e2e2;"></div>
<svg style="left:104.0px;top:758.83px;" width="16" height="16" viewBox="0 0 16 16"><rect x="0.8" y="0.8" width="14" height="14.2" fill="#fff" stroke="#4a86d0" stroke-width="1.5"/><rect x="9.6" y="1.6" width="4.6" height="12.6" fill="#cfe0f5"/><text x="2" y="12.4" font-family="Liberation Sans, sans-serif" font-weight="bold" font-size="12.5" fill="#ef7a2a">a</text><path d="M10.9 3 V13.2 M9.8 3 H12 M9.8 13.2 H12" stroke="#1f4f8a" stroke-width="1.1"/></svg>
<span class="t tg" style="top:761.4300000000001px;left:127.8px;transform-origin:0 50%;transform:translateY(-50%) scaleX(1.045);">Division</span>
<span class="t tvs" style="top:761.9300000000001px;left:351px;transform-origin:0 50%;transform:translateY(-50%) scaleX(1.000);">01</span>
<span class="t tv" style="top:767.03px;left:639px;transform-origin:0 50%;transform:translateY(-50%) scaleX(1.071);">Input</span>
<span class="t tv" style="top:767.03px;left:717px;transform-origin:0 50%;transform:translateY(-50%) scaleX(1.030);">String</span>
<div style="left:122.0px;top:780.56px;width:661.0px;height:1px;background:#e2e2e2;"></div>
<div style="left:122.0px;top:780.56px;width:1px;height:29.83000000000004px;background:#e2e2e2;"></div>
<div style="left:344px;top:780.56px;width:1px;height:29.83000000000004px;background:#e2e2e2;"></div>
<div style="left:635px;top:780.56px;width:1px;height:29.83000000000004px;background:#e2e2e2;"></div>
<div style="left:712.4px;top:780.56px;width:1px;height:29.83000000000004px;background:#e2e2e2;"></div>
<svg style="left:104.0px;top:788.66px;" width="16" height="16" viewBox="0 0 16 16"><rect x="0.8" y="0.8" width="14" height="14.2" fill="#fff" stroke="#4a86d0" stroke-width="1.5"/><rect x="9.6" y="1.6" width="4.6" height="12.6" fill="#cfe0f5"/><text x="2" y="12.4" font-family="Liberation Sans, sans-serif" font-weight="bold" font-size="12.5" fill="#ef7a2a">a</text><path d="M10.9 3 V13.2 M9.8 3 H12 M9.8 13.2 H12" stroke="#1f4f8a" stroke-width="1.1"/></svg>
<span class="t tg" style="top:791.26px;left:127.8px;transform-origin:0 50%;transform:translateY(-50%) scaleX(1.015);">Sales Office</span>
<span class="t tvs" style="top:791.76px;left:351px;transform-origin:0 50%;transform:translateY(-50%) scaleX(1.000);">AU01</span>
<span class="t tv" style="top:796.8599999999999px;left:639px;transform-origin:0 50%;transform:translateY(-50%) scaleX(1.071);">Input</span>
<span class="t tv" style="top:796.8599999999999px;left:717px;transform-origin:0 50%;transform:translateY(-50%) scaleX(1.030);">String</span>
<div style="left:122.0px;top:810.39px;width:661.0px;height:1px;background:#e2e2e2;"></div>
<div style="left:122.0px;top:810.39px;width:1px;height:29.83000000000004px;background:#e2e2e2;"></div>
<div style="left:344px;top:810.39px;width:1px;height:29.83000000000004px;background:#e2e2e2;"></div>
<div style="left:635px;top:810.39px;width:1px;height:29.83000000000004px;background:#e2e2e2;"></div>
<div style="left:712.4px;top:810.39px;width:1px;height:29.83000000000004px;background:#e2e2e2;"></div>
<svg style="left:104.0px;top:818.49px;" width="16" height="16" viewBox="0 0 16 16"><rect x="0.8" y="0.8" width="14" height="14.2" fill="#fff" stroke="#4a86d0" stroke-width="1.5"/><rect x="9.6" y="1.6" width="4.6" height="12.6" fill="#cfe0f5"/><text x="2" y="12.4" font-family="Liberation Sans, sans-serif" font-weight="bold" font-size="12.5" fill="#ef7a2a">a</text><path d="M10.9 3 V13.2 M9.8 3 H12 M9.8 13.2 H12" stroke="#1f4f8a" stroke-width="1.1"/></svg>
<span class="t tg" style="top:821.09px;left:127.8px;transform-origin:0 50%;transform:translateY(-50%) scaleX(0.986);">Sales Group</span>
<span class="t tvs" style="top:821.59px;left:351px;transform-origin:0 50%;transform:translateY(-50%) scaleX(1.048);">A01</span>
<span class="t tv" style="top:826.6899999999999px;left:639px;transform-origin:0 50%;transform:translateY(-50%) scaleX(1.071);">Input</span>
<span class="t tv" style="top:826.6899999999999px;left:717px;transform-origin:0 50%;transform:translateY(-50%) scaleX(1.030);">String</span>
<div style="left:122.0px;top:840.22px;width:661.0px;height:1px;background:#e2e2e2;"></div>
<div style="left:122.0px;top:840.22px;width:1px;height:29.83000000000004px;background:#e2e2e2;"></div>
<div style="left:344px;top:840.22px;width:1px;height:29.83000000000004px;background:#e2e2e2;"></div>
<div style="left:635px;top:840.22px;width:1px;height:29.83000000000004px;background:#e2e2e2;"></div>
<div style="left:712.4px;top:840.22px;width:1px;height:29.83000000000004px;background:#e2e2e2;"></div>
<svg style="left:104.0px;top:848.32px;" width="16" height="16" viewBox="0 0 16 16"><rect x="0.8" y="0.8" width="14" height="14.2" fill="#fff" stroke="#4a86d0" stroke-width="1.5"/><text x="2.2" y="12.2" font-family="Liberation Sans, sans-serif" font-size="10.5" fill="#ef7a2a" stroke="#ef7a2a" stroke-width="0.3" textLength="11.4" lengthAdjust="spacingAndGlyphs">OK</text></svg>
<span class="t tg" style="top:850.9200000000001px;left:127.8px;transform-origin:0 50%;transform:translateY(-50%) scaleX(1.033);">Continue (Enter)</span>
<div style="left:348.2px;top:843.72px;width:46.8px;height:23.4px;background:#2676cd;border-radius:11.7px;"></div>
<span class="t pill" style="top:855.62px;left:371.59999999999997px;transform-origin:50% 50%;transform:translate(-50%,-50%) scaleX(0.962);">CLICK</span>
<span class="t tv" style="top:856.52px;left:639px;transform-origin:0 50%;transform:translateY(-50%) scaleX(1.071);">Input</span>
<span class="t tv" style="top:856.52px;left:717px;transform-origin:0 50%;transform:translateY(-50%) scaleX(1.030);">String</span>
<div style="left:104.80000000000001px;top:870.05px;width:678.2px;height:1px;background:#e2e2e2;"></div>
<div style="left:104.80000000000001px;top:870.05px;width:1px;height:29.83000000000004px;background:#e2e2e2;"></div>
<div style="left:344px;top:870.05px;width:1px;height:29.83000000000004px;background:#e2e2e2;"></div>
<div style="left:635px;top:870.05px;width:1px;height:29.83000000000004px;background:#e2e2e2;"></div>
<div style="left:712.4px;top:870.05px;width:1px;height:29.83000000000004px;background:#e2e2e2;"></div>
<svg style="left:85.30000000000001px;top:877.05px;" width="19" height="17" viewBox="0 0 19 17"><path d="M2.8 7.6 A6.6 6 0 0 1 14.4 4.6" fill="none" stroke="#2a6fc4" stroke-width="2"/><path d="M11.4 5.4 L18 6.2 L17.2 0 Z" fill="#2a6fc4"/><path d="M16.2 9.4 A6.6 6 0 0 1 4.6 12.4" fill="none" stroke="#26b2bf" stroke-width="2"/><path d="M7.6 11.6 L1 10.8 L1.8 17 Z" fill="#26b2bf"/></svg>
<span class="t tr" style="top:886.3499999999999px;left:109.80000000000001px;transform-origin:0 50%;transform:translateY(-50%) scaleX(1.056);">Create Inquiry: Overview details</span>
<div style="left:104.80000000000001px;top:899.88px;width:678.2px;height:1px;background:#e2e2e2;"></div>
<div style="left:122.0px;top:899.88px;width:1px;height:29.83000000000004px;background:#e2e2e2;"></div>
<div style="left:344px;top:899.88px;width:1px;height:29.83000000000004px;background:#e2e2e2;"></div>
<div style="left:635px;top:899.88px;width:1px;height:29.83000000000004px;background:#e2e2e2;"></div>
<div style="left:712.4px;top:899.88px;width:1px;height:29.83000000000004px;background:#e2e2e2;"></div>
<svg style="left:104.0px;top:907.98px;" width="16" height="16" viewBox="0 0 16 16"><rect x="0.8" y="0.8" width="14" height="14.2" fill="#fff" stroke="#4a86d0" stroke-width="1.5"/><rect x="9.6" y="1.6" width="4.6" height="12.6" fill="#cfe0f5"/><text x="2" y="12.4" font-family="Liberation Sans, sans-serif" font-weight="bold" font-size="12.5" fill="#ef7a2a">a</text><path d="M10.9 3 V13.2 M9.8 3 H12 M9.8 13.2 H12" stroke="#1f4f8a" stroke-width="1.1"/></svg>
<span class="t tg" style="top:910.58px;left:127.8px;transform-origin:0 50%;transform:translateY(-50%) scaleX(1.013);">Sold-To Party</span>
<span class="t tvs" style="top:911.08px;left:351px;transform-origin:0 50%;transform:translateY(-50%) scaleX(0.979);">1000000</span>
<span class="t tv" style="top:916.18px;left:639px;transform-origin:0 50%;transform:translateY(-50%) scaleX(1.071);">Input</span>
<span class="t tv" style="top:916.18px;left:717px;transform-origin:0 50%;transform:translateY(-50%) scaleX(1.030);">String</span>
<div style="left:122.0px;top:929.71px;width:661.0px;height:1px;background:#e2e2e2;"></div>
<div style="left:122.0px;top:929.71px;width:1px;height:29.83000000000004px;background:#e2e2e2;"></div>
<div style="left:344px;top:929.71px;width:1px;height:29.83000000000004px;background:#e2e2e2;"></div>
<div style="left:635px;top:929.71px;width:1px;height:29.83000000000004px;background:#e2e2e2;"></div>
<div style="left:712.4px;top:929.71px;width:1px;height:29.83000000000004px;background:#e2e2e2;"></div>
<svg style="left:104.0px;top:937.8100000000001px;" width="16" height="16" viewBox="0 0 16 16"><rect x="0.8" y="0.8" width="14" height="14.2" fill="#fff" stroke="#4a86d0" stroke-width="1.5"/><rect x="9.6" y="1.6" width="4.6" height="12.6" fill="#cfe0f5"/><text x="2" y="12.4" font-family="Liberation Sans, sans-serif" font-weight="bold" font-size="12.5" fill="#ef7a2a">a</text><path d="M10.9 3 V13.2 M9.8 3 H12 M9.8 13.2 H12" stroke="#1f4f8a" stroke-width="1.1"/></svg>
<span class="t tg" style="top:940.4100000000001px;left:127.8px;transform-origin:0 50%;transform:translateY(-50%) scaleX(1.011);">Cust. Reference</span>
<span class="t tvs" style="top:940.9100000000001px;left:351px;transform-origin:0 50%;transform:translateY(-50%) scaleX(1.106);">Test Accelerator</span>
<span class="t tv" style="top:946.01px;left:639px;transform-origin:0 50%;transform:translateY(-50%) scaleX(1.071);">Input</span>
<span class="t tv" style="top:946.01px;left:717px;transform-origin:0 50%;transform:translateY(-50%) scaleX(1.030);">String</span>
<div style="left:122.0px;top:959.54px;width:661.0px;height:1px;background:#e2e2e2;"></div>
<div style="left:122.0px;top:959.54px;width:1px;height:29.83000000000004px;background:#e2e2e2;"></div>
<div style="left:344px;top:959.54px;width:1px;height:29.83000000000004px;background:#e2e2e2;"></div>
<div style="left:635px;top:959.54px;width:1px;height:29.83000000000004px;background:#e2e2e2;"></div>
<div style="left:712.4px;top:959.54px;width:1px;height:29.83000000000004px;background:#e2e2e2;"></div>
<svg style="left:104.0px;top:967.64px;" width="16" height="16" viewBox="0 0 16 16"><rect x="0.8" y="0.8" width="14" height="14.2" fill="#fff" stroke="#4a86d0" stroke-width="1.5"/><rect x="9.6" y="1.6" width="4.6" height="12.6" fill="#cfe0f5"/><text x="2" y="12.4" font-family="Liberation Sans, sans-serif" font-weight="bold" font-size="12.5" fill="#ef7a2a">a</text><path d="M10.9 3 V13.2 M9.8 3 H12 M9.8 13.2 H12" stroke="#1f4f8a" stroke-width="1.1"/></svg>
<span class="t tg" style="top:970.24px;left:127.8px;transform-origin:0 50%;transform:translateY(-50%) scaleX(1.000);">Cust. Ref. Date</span>
<div style="left:348.2px;top:963.04px;width:44.6px;height:23.4px;background:#2676cd;border-radius:11.7px;"></div>
<span class="t pill" style="top:974.9399999999999px;left:370.5px;transform-origin:50% 50%;transform:translate(-50%,-50%) scaleX(1.030);">DATE</span>
<span class="t tv" style="top:975.8399999999999px;left:639px;transform-origin:0 50%;transform:translateY(-50%) scaleX(1.071);">Input</span>
<span class="t tv" style="top:975.8399999999999px;left:717px;transform-origin:0 50%;transform:translateY(-50%) scaleX(1.030);">String</span>
<div style="left:122.0px;top:989.37px;width:661.0px;height:1px;background:#e2e2e2;"></div>
<div style="left:122.0px;top:989.37px;width:1px;height:29.83000000000004px;background:#e2e2e2;"></div>
<div style="left:344px;top:989.37px;width:1px;height:29.83000000000004px;background:#e2e2e2;"></div>
<div style="left:635px;top:989.37px;width:1px;height:29.83000000000004px;background:#e2e2e2;"></div>
<div style="left:712.4px;top:989.37px;width:1px;height:29.83000000000004px;background:#e2e2e2;"></div>
<svg style="left:104.0px;top:997.47px;" width="16" height="16" viewBox="0 0 16 16"><rect x="0.8" y="0.8" width="14" height="14.2" fill="#fff" stroke="#4a86d0" stroke-width="1.5"/><rect x="9.6" y="1.6" width="4.6" height="12.6" fill="#cfe0f5"/><text x="2" y="12.4" font-family="Liberation Sans, sans-serif" font-weight="bold" font-size="12.5" fill="#ef7a2a">a</text><path d="M10.9 3 V13.2 M9.8 3 H12 M9.8 13.2 H12" stroke="#1f4f8a" stroke-width="1.1"/></svg>
<span class="t tg" style="top:1000.07px;left:127.8px;transform-origin:0 50%;transform:translateY(-50%) scaleX(1.033);">Valid From</span>
<div style="left:348.2px;top:992.87px;width:82px;height:23.4px;background:#dbe9f8;border-radius:11.7px;"></div>
<div style="left:348.2px;top:992.87px;width:39px;height:23.4px;background:#2676cd;border-radius:11.7px 0 0 11.7px;"></div>
<span class="t pill" style="top:1004.77px;left:370.7px;transform-origin:50% 50%;transform:translate(-50%,-50%) scaleX(1.030);">DATE</span>
<span class="t pillv" style="top:1004.77px;left:395px;transform-origin:0 50%;transform:translateY(-50%) scaleX(1.100);">+1d</span>
<span class="t tv" style="top:1005.67px;left:639px;transform-origin:0 50%;transform:translateY(-50%) scaleX(1.071);">Input</span>
<span class="t tv" style="top:1005.67px;left:717px;transform-origin:0 50%;transform:translateY(-50%) scaleX(1.030);">String</span>
<div style="left:122.0px;top:1019.1999999999999px;width:661.0px;height:1px;background:#e2e2e2;"></div>
<div style="left:122.0px;top:1019.1999999999999px;width:1px;height:29.83000000000004px;background:#e2e2e2;"></div>
<div style="left:344px;top:1019.1999999999999px;width:1px;height:29.83000000000004px;background:#e2e2e2;"></div>
<div style="left:635px;top:1019.1999999999999px;width:1px;height:29.83000000000004px;background:#e2e2e2;"></div>
<div style="left:712.4px;top:1019.1999999999999px;width:1px;height:29.83000000000004px;background:#e2e2e2;"></div>
<svg style="left:104.0px;top:1027.2999999999997px;" width="16" height="16" viewBox="0 0 16 16"><rect x="0.8" y="0.8" width="14" height="14.2" fill="#fff" stroke="#4a86d0" stroke-width="1.5"/><rect x="9.6" y="1.6" width="4.6" height="12.6" fill="#cfe0f5"/><text x="2" y="12.4" font-family="Liberation Sans, sans-serif" font-weight="bold" font-size="12.5" fill="#ef7a2a">a</text><path d="M10.9 3 V13.2 M9.8 3 H12 M9.8 13.2 H12" stroke="#1f4f8a" stroke-width="1.1"/></svg>
<span class="t tg" style="top:1029.8999999999999px;left:127.8px;transform-origin:0 50%;transform:translateY(-50%) scaleX(1.070);">Valid To</span>
<div style="left:348.2px;top:1022.6999999999999px;width:89px;height:23.4px;background:#dbe9f8;border-radius:11.7px;"></div>
<div style="left:348.2px;top:1022.6999999999999px;width:39px;height:23.4px;background:#2676cd;border-radius:11.7px 0 0 11.7px;"></div>
<span class="t pill" style="top:1034.6px;left:370.7px;transform-origin:50% 50%;transform:translate(-50%,-50%) scaleX(1.030);">DATE</span>
<span class="t pillv" style="top:1034.6px;left:395px;transform-origin:0 50%;transform:translateY(-50%) scaleX(1.074);">+10d</span>
<span class="t tv" style="top:1035.4999999999998px;left:639px;transform-origin:0 50%;transform:translateY(-50%) scaleX(1.071);">Input</span>
<span class="t tv" style="top:1035.4999999999998px;left:717px;transform-origin:0 50%;transform:translateY(-50%) scaleX(1.030);">String</span>
<div style="left:122.0px;top:1049.03px;width:661.0px;height:1px;background:#e2e2e2;"></div>
<div style="left:122.0px;top:1049.03px;width:1px;height:29.829999999999927px;background:#e2e2e2;"></div>
<div style="left:344px;top:1049.03px;width:1px;height:29.829999999999927px;background:#e2e2e2;"></div>
<div style="left:635px;top:1049.03px;width:1px;height:29.829999999999927px;background:#e2e2e2;"></div>
<div style="left:712.4px;top:1049.03px;width:1px;height:29.829999999999927px;background:#e2e2e2;"></div>
<svg style="left:92.9px;top:1061.53px;" width="5" height="7" viewBox="0 0 5 7"><path d="M0.5 0 L4.5 3.5 L0.5 7 Z" fill="#606060"/></svg>
<svg style="left:102.9px;top:1056.53px;" width="16" height="16" viewBox="0 0 16 16"><rect x="0" y="0" width="16" height="4.6" fill="#1f5fa8"/><rect x="0.6" y="4.6" width="14.8" height="10.8" fill="#fff" stroke="#3b7bd0" stroke-width="1.2"/><path d="M5.4 5 V15 M10.6 5 V15 M1 8.4 H15 M1 11.8 H15" stroke="#ef7a2a" stroke-width="1.1"/></svg>
<span class="t tg" style="top:1059.73px;left:127.8px;transform-origin:0 50%;transform:translateY(-50%) scaleX(1.085);">All items</span>
<div style="left:344.5px;top:1049.53px;width:290.5px;height:29.33px;background:#a9a9a9;"></div>
<div style="left:635.5px;top:1049.53px;width:77px;height:29.33px;background:#eefaf0;"></div>
<span class="t tv" style="top:1065.33px;left:639px;transform-origin:0 50%;transform:translateY(-50%) scaleX(1.000);">Select</span>
<span class="t tv" style="top:1065.33px;left:717px;transform-origin:0 50%;transform:translateY(-50%) scaleX(1.030);">String</span>
<div style="left:104.80000000000001px;top:1078.8600000000001px;width:678.2px;height:1px;background:#e2e2e2;"></div>
<div style="left:104.80000000000001px;top:1078.8600000000001px;width:1px;height:29.829999999999927px;background:#e2e2e2;"></div>
<div style="left:344px;top:1078.8600000000001px;width:1px;height:29.829999999999927px;background:#e2e2e2;"></div>
<div style="left:635px;top:1078.8600000000001px;width:1px;height:29.829999999999927px;background:#e2e2e2;"></div>
<div style="left:712.4px;top:1078.8600000000001px;width:1px;height:29.829999999999927px;background:#e2e2e2;"></div>
<div style="left:782px;top:423.4px;width:15px;height:663.1px;background:#f1f1f1;"></div>
<div style="left:782px;top:440.5px;width:15px;height:394.5px;background:#c9c9c9;"></div>
<svg style="left:786.5px;top:429px;" width="8" height="5" viewBox="0 0 8 5"><path d="M0.8 4.6 L4 1.2 L7.2 4.6" fill="none" stroke="#555" stroke-width="1.5"/></svg>
<svg style="left:786.5px;top:1075px;" width="8" height="5" viewBox="0 0 8 5"><path d="M0.8 0.4 L4 3.8 L7.2 0.4" fill="none" stroke="#555" stroke-width="1.5"/></svg>
<div style="left:19.5px;top:1086.5px;width:777.5px;height:14px;background:#f1f1f1;"></div>
<div style="left:35.6px;top:1086.5px;width:726.9px;height:14px;background:#cdcdcd;"></div>
<svg style="left:24.5px;top:1090.2px;" width="5" height="8" viewBox="0 0 5 8"><path d="M4.4 0.8 L1 4 L4.4 7.2" fill="none" stroke="#555" stroke-width="1.5"/></svg>
<svg style="left:770px;top:1090.2px;" width="5" height="8" viewBox="0 0 5 8"><path d="M0.6 0.8 L4 4 L0.6 7.2" fill="none" stroke="#555" stroke-width="1.5"/></svg>
<div style="left:818.6px;top:327px;width:411.4px;height:773px;background:#c3d4e8;"></div>
<div style="left:818.6px;top:327px;width:411.4px;height:40px;background:#174c85;"></div>
<div style="left:828px;top:336px;width:133.5px;height:31.5px;background:#5b82b0;"></div>
<svg style="left:835.5px;top:342.3px;" width="17" height="15.5" viewBox="0 0 17 15.5"><path d="M0 0 H5.4 L6.8 2.4 H16.5 V15.5 H0 Z" fill="#e31b13"/></svg>
<span class="t ptab" style="top:349.6px;left:855.5px;transform-origin:0 50%;transform:translateY(-50%) scaleX(0.963);-webkit-text-stroke:0;">TestCaseDesign</span>
<span class="t ptab" style="top:349.8px;left:944px;transform-origin:0 50%;transform:translateY(-50%);font-size:9px;font-weight:bold;">✕</span>
<div style="left:832px;top:367px;width:57px;height:36.5px;background:#e5edf7;"></div>
<div style="left:897px;top:367.5px;width:66.5px;height:35px;background:#b1c6df;"></div>
<span class="t stab" style="top:385.5px;left:842.5px;transform-origin:0 50%;transform:translateY(-50%) scaleX(0.971);">Details</span>
<span class="t stab" style="top:386px;left:907.5px;transform-origin:0 50%;transform:translateY(-50%) scaleX(0.978);">Relations</span>
<svg style="left:823.5px;top:391px;" width="5" height="9" viewBox="0 0 5 9"><path d="M0 0 L5 4.5 L0 9 Z" fill="#fff"/></svg>
<div style="left:823px;top:749px;width:1.3px;height:27px;background:#dbe6f3;"></div>
<div style="left:826px;top:749px;width:1.3px;height:27px;background:#dbe6f3;"></div>
<div style="left:832px;top:403.5px;width:398px;height:20px;background:#e5edf7;"></div>
<div style="left:1211px;top:404px;width:1px;height:19px;background:#d3dbe6;"></div>
<span class="t th" style="top:412.5px;left:1020.5px;transform-origin:50% 50%;transform:translate(-50%,-50%) scaleX(1.034);">Name</span>
<svg style="left:1215.7px;top:405.9px;" width="12.8" height="12.8" viewBox="0 0 12.8 12.8"><rect width="12.8" height="12.8" fill="#dc3517"/><path d="M3.2 3.6 H9.6 M3.2 9.2 H9.6 M6.4 3.6 V9.2" stroke="#fff" stroke-width="1.8"/></svg>
<div style="left:832px;top:423.4px;width:398px;height:663.1px;background:#fff;"></div>
<div style="left:867.5px;top:423.4px;width:1px;height:29.03000000000003px;background:#e2e2e2;"></div>
<div style="left:1211px;top:423.4px;width:1px;height:29.03000000000003px;background:#e2e2e2;"></div>
<div style="left:1212px;top:423.4px;width:18px;height:29.03000000000003px;background:#fff6a6;"></div>
<span class="t tr" style="top:438.1px;left:1216px;transform-origin:0 50%;transform:translateY(-50%) scaleX(0.882);">01.</span>
<svg style="left:839.0px;top:437.1px;" width="6" height="6" viewBox="0 0 6 6"><path d="M6 0 V6 H0 Z" fill="#606060"/></svg>
<svg style="left:849.5px;top:430.90000000000003px;" width="15" height="15.4" viewBox="0 0 15 15.4"><rect x="0" y="0" width="15" height="3.4" fill="#d3261f"/><rect x="0.6" y="3.4" width="13.8" height="11.2" fill="#fff" stroke="#d9342c" stroke-width="1.2"/><path d="M5.2 4 V14.4 M9.8 4 V14.4" stroke="#5b6f8f" stroke-width="1.1"/><path d="M1 7.2 H14 M1 10.8 H14" stroke="#b5423c" stroke-width="1.1"/></svg>
<span class="t tr" style="top:438.90000000000003px;left:871.0px;transform-origin:0 50%;transform:translateY(-50%) scaleX(0.985);">Order2Cash</span>
<div style="left:867.5px;top:452.43px;width:362.5px;height:1px;background:#e2e2e2;"></div>
<div style="left:884.1px;top:452.43px;width:1px;height:29.829999999999984px;background:#e2e2e2;"></div>
<div style="left:1211px;top:452.43px;width:1px;height:29.829999999999984px;background:#e2e2e2;"></div>
<svg style="left:855.3000000000001px;top:464.93px;" width="5" height="7" viewBox="0 0 5 7"><path d="M0.5 0 L4.5 3.5 L0.5 7 Z" fill="#606060"/></svg>
<svg style="left:865.6px;top:459.93px;" width="17" height="17" viewBox="0 0 17 17"><path d="M3.6 1 H15.6 V12.6" fill="none" stroke="#ef8a85" stroke-width="1.2"/><rect x="0.8" y="3.4" width="12.6" height="12.4" fill="#fff" stroke="#d3261f" stroke-width="1.3"/><path d="M4.6 6.8 H9.6 M4.6 12.4 H9.6 M7.1 6.8 V12.4" stroke="#333" stroke-width="1.5"/></svg>
<span class="t tr" style="top:468.73px;left:889.1px;transform-origin:0 50%;transform:translateY(-50%) scaleX(1.000);">Instances</span>
<div style="left:884.1px;top:482.26px;width:345.9px;height:1px;background:#e2e2e2;"></div>
<div style="left:884.1px;top:482.26px;width:1px;height:29.83000000000004px;background:#e2e2e2;"></div>
<div style="left:1211px;top:482.26px;width:1px;height:29.83000000000004px;background:#e2e2e2;"></div>
<div style="left:1212px;top:483.26px;width:18px;height:28.83px;background:#b0b0b0;"></div>
<svg style="left:855.3000000000001px;top:494.76px;" width="5" height="7" viewBox="0 0 5 7"><path d="M0.5 0 L4.5 3.5 L0.5 7 Z" fill="#606060"/></svg>
<div style="left:866.1px;top:490.26px;width:15px;height:15px;background:#f58a84;border:1px solid #e8453e;box-sizing:border-box;"></div>
<span class="t tr" style="top:498.56px;left:889.1px;transform-origin:0 50%;transform:translateY(-50%) scaleX(1.037);">Pre Conditions</span>
<div style="left:884.1px;top:512.09px;width:345.9px;height:1px;background:#e2e2e2;"></div>
<div style="left:884.1px;top:512.09px;width:1px;height:29.83000000000004px;background:#e2e2e2;"></div>
<div style="left:1211px;top:512.09px;width:1px;height:29.83000000000004px;background:#e2e2e2;"></div>
<div style="left:1212px;top:513.09px;width:18px;height:28.83px;background:#b0b0b0;"></div>
<svg style="left:855.6px;top:526.59px;" width="6" height="6" viewBox="0 0 6 6"><path d="M6 0 V6 H0 Z" fill="#606060"/></svg>
<div style="left:866.1px;top:520.09px;width:15px;height:15px;background:#e31b13;"></div>
<span class="t tr" style="top:528.39px;left:889.1px;transform-origin:0 50%;transform:translateY(-50%) scaleX(1.118);">Workflow</span>
<div style="left:884.1px;top:541.9200000000001px;width:345.9px;height:1px;background:#e2e2e2;"></div>
<div style="left:900.7px;top:541.9200000000001px;width:1px;height:29.83000000000004px;background:#e2e2e2;"></div>
<div style="left:1211px;top:541.9200000000001px;width:1px;height:29.83000000000004px;background:#e2e2e2;"></div>
<div style="left:1212px;top:542.9200000000001px;width:18px;height:28.83px;background:#b0b0b0;"></div>
<svg style="left:871.9000000000001px;top:554.4200000000001px;" width="5" height="7" viewBox="0 0 5 7"><path d="M0.5 0 L4.5 3.5 L0.5 7 Z" fill="#606060"/></svg>
<div style="left:882.7px;top:549.9200000000001px;width:15px;height:15px;background:#e31b13;"></div>
<span class="t tr" style="top:558.22px;left:905.7px;transform-origin:0 50%;transform:translateY(-50%) scaleX(1.038);">Create Inquiry</span>
<div style="left:900.7px;top:571.75px;width:329.29999999999995px;height:1px;background:#e2e2e2;"></div>
<div style="left:900.7px;top:571.75px;width:1px;height:29.83000000000004px;background:#e2e2e2;"></div>
<div style="left:1211px;top:571.75px;width:1px;height:29.83000000000004px;background:#e2e2e2;"></div>
<div style="left:1212px;top:572.75px;width:18px;height:28.83px;background:#b0b0b0;"></div>
<svg style="left:871.9000000000001px;top:584.25px;" width="5" height="7" viewBox="0 0 5 7"><path d="M0.5 0 L4.5 3.5 L0.5 7 Z" fill="#606060"/></svg>
<div style="left:882.7px;top:579.75px;width:15px;height:15px;background:#e31b13;"></div>
<span class="t tr" style="top:588.05px;left:905.7px;transform-origin:0 50%;transform:translateY(-50%) scaleX(1.053);">Create Quotation</span>
<div style="left:900.7px;top:601.58px;width:310.29999999999995px;height:29.83px;background:#e4e4e4;"></div>
<div style="left:900.7px;top:601.58px;width:329.29999999999995px;height:1px;background:#e2e2e2;"></div>
<div style="left:900.7px;top:601.58px;width:1px;height:29.83000000000004px;background:#e2e2e2;"></div>
<div style="left:1211px;top:601.58px;width:1px;height:29.83000000000004px;background:#e2e2e2;"></div>
<div style="left:1212px;top:602.58px;width:18px;height:28.83px;background:#b0b0b0;"></div>
<svg style="left:872.2px;top:616.08px;" width="6" height="6" viewBox="0 0 6 6"><path d="M6 0 V6 H0 Z" fill="#606060"/></svg>
<div style="left:882.7px;top:609.58px;width:15px;height:15px;background:#e31b13;"></div>
<span class="t tr" style="top:617.88px;left:905.7px;transform-origin:0 50%;transform:translateY(-50%) scaleX(0.991);">Create Sales Order</span>
<div style="left:900.7px;top:631.4100000000001px;width:329.29999999999995px;height:1px;background:#e2e2e2;"></div>
<div style="left:917.3px;top:631.4100000000001px;width:1px;height:29.83000000000004px;background:#e2e2e2;"></div>
<div style="left:1211px;top:631.4100000000001px;width:1px;height:29.83000000000004px;background:#e2e2e2;"></div>
<svg style="left:1215.7px;top:640.3100000000001px;" width="12.8" height="12.8" viewBox="0 0 12.8 12.8"><rect width="12.8" height="12.8" fill="#dc3517"/><path d="M3.2 3.6 H9.6 M3.2 9.2 H9.6 M6.4 3.6 V9.2" stroke="#fff" stroke-width="1.8"/></svg>
<svg style="left:888.5px;top:643.9100000000001px;" width="5" height="7" viewBox="0 0 5 7"><path d="M0.5 0 L4.5 3.5 L0.5 7 Z" fill="#606060"/></svg>
<div style="left:899.3px;top:639.4100000000001px;width:15px;height:15px;background:#e31b13;"></div>
<span class="t tr" style="top:647.71px;left:922.3px;transform-origin:0 50%;transform:translateY(-50%) scaleX(1.015);">Transaction</span>
<div style="left:917.3px;top:661.24px;width:312.70000000000005px;height:1px;background:#e2e2e2;"></div>
<div style="left:917.3px;top:661.24px;width:1px;height:29.83000000000004px;background:#e2e2e2;"></div>
<div style="left:1211px;top:661.24px;width:1px;height:29.83000000000004px;background:#e2e2e2;"></div>
<div style="left:1212px;top:662.24px;width:18px;height:28.83px;background:#b0b0b0;"></div>
<svg style="left:888.8px;top:675.74px;" width="6" height="6" viewBox="0 0 6 6"><path d="M6 0 V6 H0 Z" fill="#606060"/></svg>
<div style="left:899.3px;top:669.24px;width:15px;height:15px;background:#e31b13;"></div>
<span class="t tr" style="top:677.54px;left:922.3px;transform-origin:0 50%;transform:translateY(-50%) scaleX(1.042);">Initial Screen</span>
<div style="left:917.3px;top:691.0699999999999px;width:312.70000000000005px;height:1px;background:#e2e2e2;"></div>
<div style="left:933.9px;top:691.0699999999999px;width:1px;height:29.83000000000004px;background:#e2e2e2;"></div>
<div style="left:1211px;top:691.0699999999999px;width:1px;height:29.83000000000004px;background:#e2e2e2;"></div>
<div style="left:1212px;top:692.0699999999999px;width:18px;height:28.83px;background:#b0b0b0;"></div>
<svg style="left:905.1px;top:703.5699999999999px;" width="5" height="7" viewBox="0 0 5 7"><path d="M0.5 0 L4.5 3.5 L0.5 7 Z" fill="#606060"/></svg>
<div style="left:915.9px;top:699.0699999999999px;width:15px;height:15px;background:#e31b13;"></div>
<span class="t tr" style="top:707.3699999999999px;left:938.9px;transform-origin:0 50%;transform:translateY(-50%) scaleX(1.011);">Create Sales Order: Initial Screen</span>
<div style="left:933.9px;top:720.9px;width:296.1px;height:1px;background:#e2e2e2;"></div>
<div style="left:933.9px;top:720.9px;width:1px;height:29.83000000000004px;background:#e2e2e2;"></div>
<div style="left:1211px;top:720.9px;width:1px;height:29.83000000000004px;background:#e2e2e2;"></div>
<div style="left:1212px;top:721.9px;width:18px;height:28.83px;background:#b0b0b0;"></div>
<svg style="left:905.1px;top:733.4px;" width="5" height="7" viewBox="0 0 5 7"><path d="M0.5 0 L4.5 3.5 L0.5 7 Z" fill="#606060"/></svg>
<div style="left:915.9px;top:728.9px;width:15px;height:15px;background:#e31b13;"></div>
<span class="t tr" style="top:737.1999999999999px;left:938.9px;transform-origin:0 50%;transform:translateY(-50%) scaleX(1.010);">Enter Header data</span>
<div style="left:917.3px;top:750.73px;width:312.70000000000005px;height:1px;background:#e2e2e2;"></div>
<div style="left:917.3px;top:750.73px;width:1px;height:29.83000000000004px;background:#e2e2e2;"></div>
<div style="left:1211px;top:750.73px;width:1px;height:29.83000000000004px;background:#e2e2e2;"></div>
<div style="left:1212px;top:751.73px;width:18px;height:28.83px;background:#b0b0b0;"></div>
<svg style="left:888.8px;top:765.23px;" width="6" height="6" viewBox="0 0 6 6"><path d="M6 0 V6 H0 Z" fill="#606060"/></svg>
<div style="left:899.3px;top:758.73px;width:15px;height:15px;background:#e31b13;"></div>
<span class="t tr" style="top:767.03px;left:922.3px;transform-origin:0 50%;transform:translateY(-50%) scaleX(1.041);">Material Data</span>
<div style="left:917.3px;top:780.56px;width:312.70000000000005px;height:1px;background:#e2e2e2;"></div>
<div style="left:933.9px;top:780.56px;width:1px;height:29.83000000000004px;background:#e2e2e2;"></div>
<div style="left:1211px;top:780.56px;width:1px;height:29.83000000000004px;background:#e2e2e2;"></div>
<svg style="left:1215.7px;top:789.4599999999999px;" width="12.8" height="12.8" viewBox="0 0 12.8 12.8"><rect width="12.8" height="12.8" fill="#dc3517"/><path d="M3.2 3.6 H9.6 M3.2 9.2 H9.6 M6.4 3.6 V9.2" stroke="#fff" stroke-width="1.8"/></svg>
<svg style="left:905.1px;top:793.06px;" width="5" height="7" viewBox="0 0 5 7"><path d="M0.5 0 L4.5 3.5 L0.5 7 Z" fill="#606060"/></svg>
<div style="left:915.9px;top:788.56px;width:15px;height:15px;background:#e31b13;"></div>
<span class="t tr" style="top:796.8599999999999px;left:938.9px;transform-origin:0 50%;transform:translateY(-50%) scaleX(1.051);">Enter Material</span>
<div style="left:933.9px;top:810.39px;width:296.1px;height:1px;background:#e2e2e2;"></div>
<div style="left:933.9px;top:810.39px;width:1px;height:29.83000000000004px;background:#e2e2e2;"></div>
<div style="left:1211px;top:810.39px;width:1px;height:29.83000000000004px;background:#e2e2e2;"></div>
<svg style="left:1215.7px;top:819.29px;" width="12.8" height="12.8" viewBox="0 0 12.8 12.8"><rect width="12.8" height="12.8" fill="#dc3517"/><path d="M3.2 3.6 H9.6 M3.2 9.2 H9.6 M6.4 3.6 V9.2" stroke="#fff" stroke-width="1.8"/></svg>
<svg style="left:905.1px;top:822.89px;" width="5" height="7" viewBox="0 0 5 7"><path d="M0.5 0 L4.5 3.5 L0.5 7 Z" fill="#606060"/></svg>
<div style="left:915.9px;top:818.39px;width:15px;height:15px;background:#e31b13;"></div>
<span class="t tr" style="top:826.6899999999999px;left:938.9px;transform-origin:0 50%;transform:translateY(-50%) scaleX(1.050);">Enter Quantity</span>
<div style="left:917.3px;top:840.22px;width:312.70000000000005px;height:1px;background:#e2e2e2;"></div>
<div style="left:917.3px;top:840.22px;width:1px;height:29.83000000000004px;background:#e2e2e2;"></div>
<div style="left:1211px;top:840.22px;width:1px;height:29.83000000000004px;background:#e2e2e2;"></div>
<div style="left:1212px;top:841.22px;width:18px;height:28.83px;background:#b0b0b0;"></div>
<svg style="left:888.8px;top:854.72px;" width="6" height="6" viewBox="0 0 6 6"><path d="M6 0 V6 H0 Z" fill="#606060"/></svg>
<div style="left:899.3px;top:848.22px;width:15px;height:15px;background:#e31b13;"></div>
<span class="t tr" style="top:856.52px;left:922.3px;transform-origin:0 50%;transform:translateY(-50%) scaleX(1.044);">Enter Data in different Item  tabs</span>
<div style="left:917.3px;top:870.05px;width:312.70000000000005px;height:1px;background:#e2e2e2;"></div>
<div style="left:933.9px;top:870.05px;width:1px;height:29.83000000000004px;background:#e2e2e2;"></div>
<div style="left:1211px;top:870.05px;width:1px;height:29.83000000000004px;background:#e2e2e2;"></div>
<svg style="left:1215.7px;top:878.9499999999999px;" width="12.8" height="12.8" viewBox="0 0 12.8 12.8"><rect width="12.8" height="12.8" fill="#dc3517"/><path d="M3.2 3.6 H9.6 M3.2 9.2 H9.6 M6.4 3.6 V9.2" stroke="#fff" stroke-width="1.8"/></svg>
<svg style="left:905.1px;top:882.55px;" width="5" height="7" viewBox="0 0 5 7"><path d="M0.5 0 L4.5 3.5 L0.5 7 Z" fill="#606060"/></svg>
<div style="left:915.9px;top:878.05px;width:15px;height:15px;background:#e31b13;"></div>
<span class="t tr" style="top:886.3499999999999px;left:938.9px;transform-origin:0 50%;transform:translateY(-50%) scaleX(1.071);">Profit Center</span>
<div style="left:900.7px;top:899.88px;width:329.29999999999995px;height:1px;background:#e2e2e2;"></div>
<div style="left:900.7px;top:899.88px;width:1px;height:29.83000000000004px;background:#e2e2e2;"></div>
<div style="left:1211px;top:899.88px;width:1px;height:29.83000000000004px;background:#e2e2e2;"></div>
<div style="left:1212px;top:900.88px;width:18px;height:28.83px;background:#b0b0b0;"></div>
<svg style="left:872.2px;top:914.38px;" width="6" height="6" viewBox="0 0 6 6"><path d="M6 0 V6 H0 Z" fill="#606060"/></svg>
<div style="left:882.7px;top:907.88px;width:15px;height:15px;background:#e31b13;"></div>
<span class="t tr" style="top:916.18px;left:905.7px;transform-origin:0 50%;transform:translateY(-50%) scaleX(1.041);">Create Outbound Delivery</span>
<div style="left:900.7px;top:929.71px;width:329.29999999999995px;height:1px;background:#e2e2e2;"></div>
<div style="left:917.3px;top:929.71px;width:1px;height:29.83000000000004px;background:#e2e2e2;"></div>
<div style="left:1211px;top:929.71px;width:1px;height:29.83000000000004px;background:#e2e2e2;"></div>
<svg style="left:1215.7px;top:938.61px;" width="12.8" height="12.8" viewBox="0 0 12.8 12.8"><rect width="12.8" height="12.8" fill="#dc3517"/><path d="M3.2 3.6 H9.6 M3.2 9.2 H9.6 M6.4 3.6 V9.2" stroke="#fff" stroke-width="1.8"/></svg>
<svg style="left:888.5px;top:942.21px;" width="5" height="7" viewBox="0 0 5 7"><path d="M0.5 0 L4.5 3.5 L0.5 7 Z" fill="#606060"/></svg>
<div style="left:899.3px;top:937.71px;width:15px;height:15px;background:#e31b13;"></div>
<span class="t tr" style="top:946.01px;left:922.3px;transform-origin:0 50%;transform:translateY(-50%) scaleX(1.015);">Transaction</span>
<div style="left:917.3px;top:959.54px;width:312.70000000000005px;height:1px;background:#e2e2e2;"></div>
<div style="left:917.3px;top:959.54px;width:1px;height:29.83000000000004px;background:#e2e2e2;"></div>
<div style="left:1211px;top:959.54px;width:1px;height:29.83000000000004px;background:#e2e2e2;"></div>
<div style="left:1212px;top:960.54px;width:18px;height:28.83px;background:#b0b0b0;"></div>
<svg style="left:888.5px;top:972.04px;" width="5" height="7" viewBox="0 0 5 7"><path d="M0.5 0 L4.5 3.5 L0.5 7 Z" fill="#606060"/></svg>
<div style="left:899.3px;top:967.54px;width:15px;height:15px;background:#e31b13;"></div>
<span class="t tr" style="top:975.8399999999999px;left:922.3px;transform-origin:0 50%;transform:translateY(-50%) scaleX(1.041);">Create Outbound Delivery with Order Reference</span>
<div style="left:917.3px;top:989.37px;width:312.70000000000005px;height:1px;background:#e2e2e2;"></div>
<div style="left:917.3px;top:989.37px;width:1px;height:29.83000000000004px;background:#e2e2e2;"></div>
<div style="left:1211px;top:989.37px;width:1px;height:29.83000000000004px;background:#e2e2e2;"></div>
<svg style="left:1215.7px;top:998.27px;" width="12.8" height="12.8" viewBox="0 0 12.8 12.8"><rect width="12.8" height="12.8" fill="#dc3517"/><path d="M3.2 3.6 H9.6 M3.2 9.2 H9.6 M6.4 3.6 V9.2" stroke="#fff" stroke-width="1.8"/></svg>
<svg style="left:888.5px;top:1001.87px;" width="5" height="7" viewBox="0 0 5 7"><path d="M0.5 0 L4.5 3.5 L0.5 7 Z" fill="#606060"/></svg>
<div style="left:899.3px;top:997.37px;width:15px;height:15px;background:#e31b13;"></div>
<span class="t tr" style="top:1005.67px;left:922.3px;transform-origin:0 50%;transform:translateY(-50%) scaleX(1.044);">Picking Quantity</span>
<div style="left:900.7px;top:1019.1999999999999px;width:329.29999999999995px;height:1px;background:#e2e2e2;"></div>
<div style="left:900.7px;top:1019.1999999999999px;width:1px;height:29.83000000000004px;background:#e2e2e2;"></div>
<div style="left:1211px;top:1019.1999999999999px;width:1px;height:29.83000000000004px;background:#e2e2e2;"></div>
<div style="left:1212px;top:1020.1999999999999px;width:18px;height:28.83px;background:#b0b0b0;"></div>
<svg style="left:872.2px;top:1033.6999999999998px;" width="6" height="6" viewBox="0 0 6 6"><path d="M6 0 V6 H0 Z" fill="#606060"/></svg>
<div style="left:882.7px;top:1027.1999999999998px;width:15px;height:15px;background:#e31b13;"></div>
<span class="t tr" style="top:1035.4999999999998px;left:905.7px;transform-origin:0 50%;transform:translateY(-50%) scaleX(1.037);">Create Billing Document</span>
<div style="left:900.7px;top:1049.03px;width:329.29999999999995px;height:1px;background:#e2e2e2;"></div>
<div style="left:917.3px;top:1049.03px;width:1px;height:29.829999999999927px;background:#e2e2e2;"></div>
<div style="left:1211px;top:1049.03px;width:1px;height:29.829999999999927px;background:#e2e2e2;"></div>
<svg style="left:1215.7px;top:1057.93px;" width="12.8" height="12.8" viewBox="0 0 12.8 12.8"><rect width="12.8" height="12.8" fill="#dc3517"/><path d="M3.2 3.6 H9.6 M3.2 9.2 H9.6 M6.4 3.6 V9.2" stroke="#fff" stroke-width="1.8"/></svg>
<svg style="left:888.5px;top:1061.53px;" width="5" height="7" viewBox="0 0 5 7"><path d="M0.5 0 L4.5 3.5 L0.5 7 Z" fill="#606060"/></svg>
<div style="left:899.3px;top:1057.03px;width:15px;height:15px;background:#e31b13;"></div>
<span class="t tr" style="top:1065.33px;left:922.3px;transform-origin:0 50%;transform:translateY(-50%) scaleX(1.015);">Transaction</span>
<div style="left:917.3px;top:1078.8600000000001px;width:312.70000000000005px;height:1px;background:#e2e2e2;"></div>
<div style="left:917.3px;top:1078.8600000000001px;width:1px;height:29.829999999999927px;background:#e2e2e2;"></div>
<div style="left:1211px;top:1078.8600000000001px;width:1px;height:29.829999999999927px;background:#e2e2e2;"></div>
<div style="left:1212px;top:1079.8600000000001px;width:18px;height:28.83px;background:#b0b0b0;"></div>
<div style="left:832px;top:1086.5px;width:398px;height:14px;background:#f1f1f1;"></div>
<div style="left:848.5px;top:1086.5px;width:382px;height:14px;background:#cdcdcd;"></div>
<svg style="left:837.5px;top:1090.2px;" width="5" height="8" viewBox="0 0 5 8"><path d="M4.4 0.8 L1 4 L4.4 7.2" fill="none" stroke="#555" stroke-width="1.5"/></svg>
</div>
</body></html>
